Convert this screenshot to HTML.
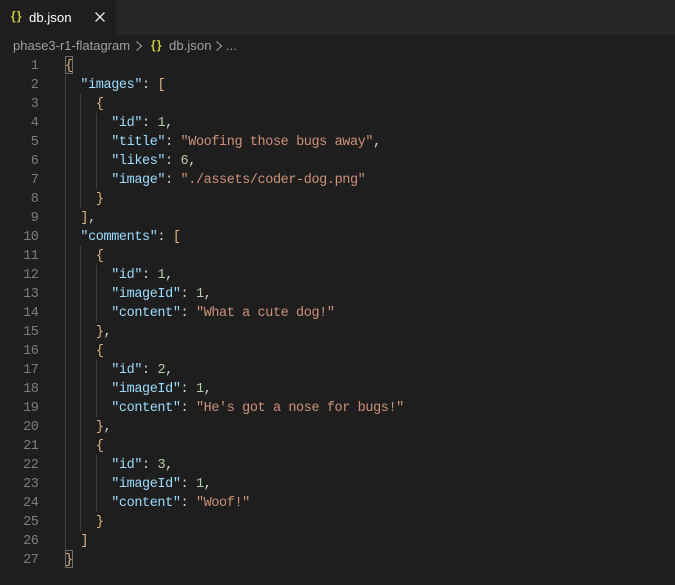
<!DOCTYPE html>
<html><head><meta charset="utf-8"><style>
html,body{margin:0;padding:0;background:#1e1e1e;width:675px;height:585px;overflow:hidden}
body{position:relative;font-family:"DejaVu Sans","Liberation Sans",sans-serif}
.tabbar{position:absolute;left:0;top:0;width:675px;height:35px;background:#252526}
.tab{position:absolute;left:0;top:0;width:116px;height:35px;background:#1e1e1e}
.abs{position:absolute;white-space:pre}
.ui{font-family:"Liberation Sans",sans-serif}
.line{position:absolute;left:65px;margin-top:1px;height:19px;line-height:19px;white-space:pre;font-family:"Liberation Mono",monospace;font-size:13.5px;letter-spacing:-.4px;color:#d4d4d4}
.n{position:absolute;left:0;margin-top:1px;width:38.5px;text-align:right;height:19px;line-height:19px;font-family:"Liberation Mono",monospace;font-size:13.5px;letter-spacing:-.4px;color:#7d7d7d}
.k{color:#9cdcfe}.s{color:#ce9178}.v{color:#b5cea8}.b{color:#dcb67a}.c{color:#d4d4d4}
.g{position:absolute;width:1px;background:#404040}
.box{position:absolute;left:65px;width:6px;height:16px;border:1px solid #6e6e6e}
</style></head><body>
<div class="tabbar"><div class="tab"></div></div>
<div class="abs ui" style="left:11px;top:9px;font-size:12px;font-weight:bold;letter-spacing:1.2px;color:#cbcb41;line-height:15px">{}</div>
<div class="abs ui" style="left:29px;top:9px;font-size:13.2px;color:#fff;line-height:17px">db.json</div>
<svg class="abs" style="left:94px;top:11px" width="12" height="12" viewBox="0 0 12 12"><path d="M1.5 1.5L10.5 10.5M10.5 1.5L1.5 10.5" stroke="#e8e8e8" stroke-width="1.3" fill="none"/></svg>
<div class="abs ui" style="left:13px;top:37px;font-size:13px;color:#a0a0a0;line-height:17px">phase3-r1-flatagram</div>
<svg class="abs" style="left:134px;top:40px" width="10" height="12" viewBox="0 0 10 12"><path d="M2.5 1.5L7.5 6L2.5 10.5" stroke="#a0a0a0" stroke-width="1.1" fill="none"/></svg>
<div class="abs ui" style="left:151px;top:38px;font-size:12px;font-weight:bold;letter-spacing:1.2px;color:#cbcb41;line-height:15px">{}</div>
<div class="abs ui" style="left:169px;top:37px;font-size:13.2px;color:#a0a0a0;line-height:17px">db.json</div>
<svg class="abs" style="left:214px;top:40px" width="10" height="12" viewBox="0 0 10 12"><path d="M2.5 1.5L7.5 6L2.5 10.5" stroke="#a0a0a0" stroke-width="1.1" fill="none"/></svg>
<div class="abs ui" style="left:226px;top:37px;font-size:13px;color:#a0a0a0;line-height:17px">...</div>

<div class="g" style="left:65px;top:75px;height:475px"></div>
<div class="g" style="left:80px;top:94px;height:114px"></div>
<div class="g" style="left:80px;top:246px;height:285px"></div>
<div class="g" style="left:96px;top:113px;height:76px"></div>
<div class="g" style="left:96px;top:265px;height:57px"></div>
<div class="g" style="left:96px;top:360px;height:57px"></div>
<div class="g" style="left:96px;top:455px;height:57px"></div>
<div class="box" style="top:56px"></div>
<div class="box" style="top:550px"></div>

<div class="n" style="top:56px">1</div><div class="line" style="top:56px"><span class="b">{</span></div>
<div class="n" style="top:75px">2</div><div class="line" style="top:75px">  <span class="k">"images"</span>: <span class="b">[</span></div>
<div class="n" style="top:94px">3</div><div class="line" style="top:94px">    <span class="b">{</span></div>
<div class="n" style="top:113px">4</div><div class="line" style="top:113px">      <span class="k">"id"</span>: <span class="v">1</span>,</div>
<div class="n" style="top:132px">5</div><div class="line" style="top:132px">      <span class="k">"title"</span>: <span class="s">"Woofing those bugs away"</span>,</div>
<div class="n" style="top:151px">6</div><div class="line" style="top:151px">      <span class="k">"likes"</span>: <span class="v">6</span>,</div>
<div class="n" style="top:170px">7</div><div class="line" style="top:170px">      <span class="k">"image"</span>: <span class="s">"./assets/coder-dog.png"</span></div>
<div class="n" style="top:189px">8</div><div class="line" style="top:189px">    <span class="b">}</span></div>
<div class="n" style="top:208px">9</div><div class="line" style="top:208px">  <span class="b">]</span>,</div>
<div class="n" style="top:227px">10</div><div class="line" style="top:227px">  <span class="k">"comments"</span>: <span class="b">[</span></div>
<div class="n" style="top:246px">11</div><div class="line" style="top:246px">    <span class="b">{</span></div>
<div class="n" style="top:265px">12</div><div class="line" style="top:265px">      <span class="k">"id"</span>: <span class="v">1</span>,</div>
<div class="n" style="top:284px">13</div><div class="line" style="top:284px">      <span class="k">"imageId"</span>: <span class="v">1</span>,</div>
<div class="n" style="top:303px">14</div><div class="line" style="top:303px">      <span class="k">"content"</span>: <span class="s">"What a cute dog!"</span></div>
<div class="n" style="top:322px">15</div><div class="line" style="top:322px">    <span class="b">}</span>,</div>
<div class="n" style="top:341px">16</div><div class="line" style="top:341px">    <span class="b">{</span></div>
<div class="n" style="top:360px">17</div><div class="line" style="top:360px">      <span class="k">"id"</span>: <span class="v">2</span>,</div>
<div class="n" style="top:379px">18</div><div class="line" style="top:379px">      <span class="k">"imageId"</span>: <span class="v">1</span>,</div>
<div class="n" style="top:398px">19</div><div class="line" style="top:398px">      <span class="k">"content"</span>: <span class="s">"He's got a nose for bugs!"</span></div>
<div class="n" style="top:417px">20</div><div class="line" style="top:417px">    <span class="b">}</span>,</div>
<div class="n" style="top:436px">21</div><div class="line" style="top:436px">    <span class="b">{</span></div>
<div class="n" style="top:455px">22</div><div class="line" style="top:455px">      <span class="k">"id"</span>: <span class="v">3</span>,</div>
<div class="n" style="top:474px">23</div><div class="line" style="top:474px">      <span class="k">"imageId"</span>: <span class="v">1</span>,</div>
<div class="n" style="top:493px">24</div><div class="line" style="top:493px">      <span class="k">"content"</span>: <span class="s">"Woof!"</span></div>
<div class="n" style="top:512px">25</div><div class="line" style="top:512px">    <span class="b">}</span></div>
<div class="n" style="top:531px">26</div><div class="line" style="top:531px">  <span class="b">]</span></div>
<div class="n" style="top:550px">27</div><div class="line" style="top:550px"><span class="b">}</span></div>
</body></html>
